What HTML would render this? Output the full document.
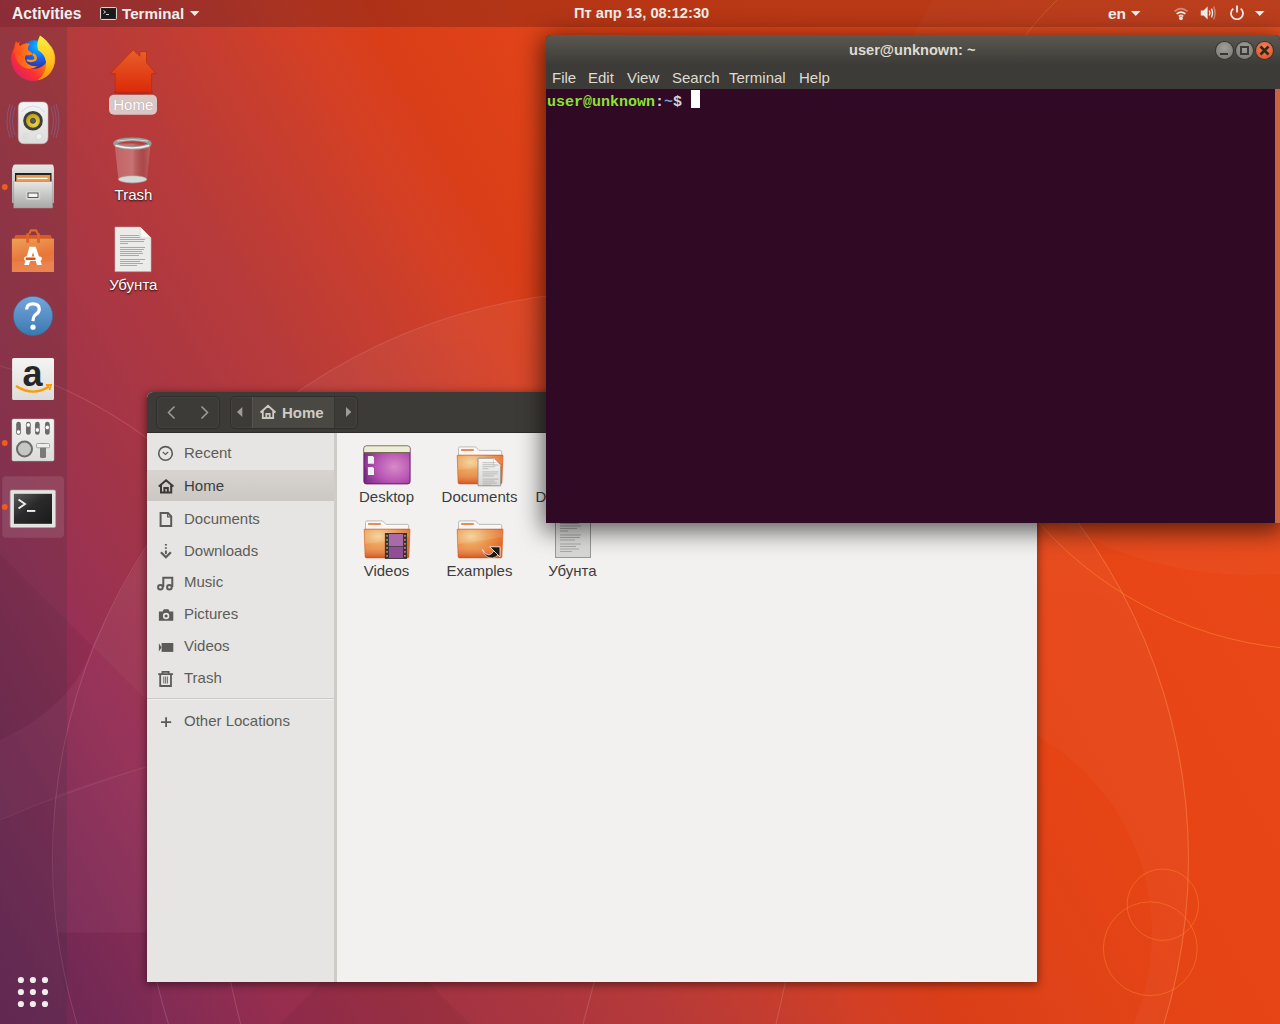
<!DOCTYPE html>
<html><head><meta charset="utf-8">
<style>
*{margin:0;padding:0;box-sizing:border-box}
html,body{width:1280px;height:1024px;overflow:hidden}
body{position:relative;font-family:"Liberation Sans",sans-serif;
background:linear-gradient(60deg,#6c2658 0%,#782a56 6%,#963056 15.5%,#a0344a 22%,#b83b3a 36%,#c83e2e 42.5%,#d54024 47%,#da3e18 51%,#e04318 58%,#e64414 66%,#e84616 75%,#ea4a18 100%)}
.abs{position:absolute}
#wp{position:absolute;left:0;top:0;width:1280px;height:1024px}
#topbar{position:absolute;left:0;top:0;width:1280px;height:27px;background:rgba(0,0,20,0.2);color:#eeeeec;font-weight:bold;font-size:15px}
#dock{position:absolute;left:0;top:27px;width:67px;height:997px;background:rgba(58,54,64,0.21)}
.dicon{position:absolute}
.deskicon{position:absolute;color:#fff;font-size:15px;text-align:center;text-shadow:0 1px 2px rgba(0,0,0,0.9)}
/* nautilus */
#naut{position:absolute;left:147px;top:392px;width:890px;height:590px;background:#f2f1f0;border-radius:6px 6px 0 0;box-shadow:0 2px 9px 1px rgba(0,0,0,0.45)}
#nhead{position:absolute;left:0;top:0;width:890px;height:41px;background:#3c3b37;border-radius:6px 6px 0 0;border-bottom:1px solid #2e2d2a}
#nside{position:absolute;left:0;top:41px;width:187px;height:549px;background:#e6e5e3}
#ndiv{position:absolute;left:187px;top:41px;width:3px;height:549px;background:#cfcbc7}
.srow{position:absolute;left:0;width:187px;height:32px;color:#5d5b56;font-size:15px}
.srow span{position:absolute;left:37px;top:7px}
.nbtn{position:absolute;top:4px;height:33px;border:1px solid #2f2e2a;border-radius:5px;box-shadow:inset 0 0 0 1px rgba(255,255,255,0.04)}
.stxt{position:absolute;left:37px;font-size:15px;line-height:17px;color:#5e5c57}
.srow.sel{background:linear-gradient(#d8d5d1,#ccc8c4);border-top:1px solid #c9c6c2}
.flbl{position:absolute;color:#3c3c3c;font-size:15px;line-height:17px;text-align:center;width:93px}
/* terminal */
#term{position:absolute;left:546px;top:35px;width:734px;height:488px;background:#300a24;border-radius:5px 5px 0 0;box-shadow:0 5px 24px 3px rgba(0,0,0,0.62)}
#ttitle{position:absolute;left:0;top:0;width:734px;height:29px;border-radius:5px 5px 0 0;background:linear-gradient(#5a5850,#3d3c38)}
#tmenu{position:absolute;left:0;top:29px;width:734px;height:25px;background:#3c3b37;color:#dfdbd2;font-size:15px}
#tmenu span{position:absolute;top:5px}
.wbtn{position:absolute;top:7px;width:17px;height:17px;border-radius:50%;background:radial-gradient(circle at 50% 35%,#a09e98,#77756f);box-shadow:0 0 0 1px #36352f}
.wbtn.cls{background:radial-gradient(circle at 50% 35%,#f6845a,#df4b1d)}
</style></head><body>
<svg id="wp" width="1280" height="1024">
 <defs><linearGradient id="cov" x1="0" y1="0" x2="0" y2="1"><stop offset="0" stop-color="#fff" stop-opacity="0.05"/><stop offset="0.12" stop-color="#fff" stop-opacity="0.035"/><stop offset="0.3" stop-color="#fff" stop-opacity="0"/></linearGradient></defs>
 <circle cx="620.5" cy="859" r="568" fill="url(#cov)" stroke="#ffa8c0" stroke-opacity="0.2" stroke-width="1"/>
 <defs><linearGradient id="bsh" x1="0" y1="0" x2="1" y2="0"><stop offset="0" stop-color="rgb(150,20,0)" stop-opacity="0"/><stop offset="0.14" stop-color="rgb(150,20,0)" stop-opacity="0.09"/><stop offset="0.63" stop-color="rgb(150,20,0)" stop-opacity="0.03"/><stop offset="1" stop-color="rgb(150,20,0)" stop-opacity="0"/></linearGradient></defs>
 <rect x="140" y="975" width="910" height="49" fill="url(#bsh)"/>
 <path d="M0 366Q75 386 147 438" fill="none" stroke="#ff9aa0" stroke-opacity="0.22" stroke-width="1.2"/>
 <path d="M0 554L92 646Q75 705 0 740Z" fill="#000" fill-opacity="0.05"/>
 <path d="M375 929L470 1024H280Z" fill="#000" fill-opacity="0.05"/>
 <path d="M152 540Q118 590 92.5 646.5L152 706Z" fill="#fff" fill-opacity="0.05"/>
 <path d="M0 740Q75 705 92.5 646.5L152 706V765Q70 790 0 820Z" fill="#fff" fill-opacity="0.025"/>
 <path d="M0 820Q70 790 152 765" fill="none" stroke="#ffa0c0" stroke-opacity="0.12" stroke-width="1"/>
 <path d="M57 932.5H152V1024H77Q60 990 57 932.5Z" fill="#000" fill-opacity="0.02"/>
 <path d="M152 765Q110 776 55 795Q52 860 57 932.5H152Z" fill="#fff" fill-opacity="0.03"/>
 <g stroke="#fff" stroke-opacity="0.14" stroke-width="1.1" fill="none">
  <path d="M152 960Q158 990 168.5 1024"/><path d="M226 960Q232 990 240.6 1024"/><path d="M600 960Q592 990 583 1024"/><path d="M790 960Q784 990 776 1024"/>
 </g>
 <circle cx="1250" cy="200" r="375" fill="#fff" fill-opacity="0.03"/>
 <circle cx="620.5" cy="859" r="568" fill="none" stroke="#ff8a30" stroke-opacity="0.35" stroke-width="1" clip-path="url(#rclip)"/>
 <clipPath id="rclip"><rect x="1000" y="500" width="280" height="524"/></clipPath>
 <path d="M52.5 859A568 568 0 1 0 1188.5 859A568 568 0 1 0 52.5 859ZM696 934A228 228 0 1 1 1152 934A228 228 0 1 1 696 934Z" fill="#fff" fill-opacity="0.03" fill-rule="evenodd" clip-path="url(#rclip)"/>
 <circle cx="1322" cy="271" r="379" fill="none" stroke="#ff8a30" stroke-opacity="0.55" stroke-width="1"/>
 <circle cx="1162.8" cy="904.7" r="35.7" fill="none" stroke="#ff8a30" stroke-opacity="0.45" stroke-width="1"/>
 <circle cx="1150.3" cy="948.7" r="46.9" fill="none" stroke="#ff8a30" stroke-opacity="0.45" stroke-width="1"/>
</svg>
<div id="topbar">
  <div class="abs" style="left:12px;top:5px;line-height:17px;font-size:15.6px">Activities</div>
  <svg class="abs" style="left:100px;top:7px" width="17" height="13"><rect x="0.5" y="0.5" width="16" height="12" rx="1" fill="#2e2e2e" stroke="#d8d8d8" stroke-width="1"/><rect x="1.5" y="1.5" width="14" height="10" fill="#1a1a1a"/><path d="M3.5 3.5L5.5 5L3.5 6.5" stroke="#eee" stroke-width="0.9" fill="none"/><path d="M6 7.5H9" stroke="#eee" stroke-width="0.9"/></svg>
  <div class="abs" style="left:122px;top:5px;line-height:17px;font-size:15.2px">Terminal</div>
  <svg class="abs" style="left:190px;top:11px" width="10" height="6"><path d="M0 0H9.5L4.75 5Z" fill="#eeeeec"/></svg>
  <div class="abs" style="left:574px;top:5px;line-height:17px;font-size:14.7px">Пт апр 13, 08:12:30</div>
  <div class="abs" style="left:1108px;top:5px;line-height:17px;font-size:15.5px">en</div>
  <svg class="abs" style="left:1131px;top:11px" width="10" height="6"><path d="M0 0H9.5L4.75 5Z" fill="#eeeeec"/></svg>
  <svg class="abs" style="left:1173px;top:6px" width="16" height="15"><path d="M1.5 5.3Q8 -0.2 14.5 5.3" stroke="#eeeeec" stroke-opacity="0.45" stroke-width="1.6" fill="none"/><path d="M3.6 7.9Q8 4.2 12.4 7.9" stroke="#eeeeec" stroke-width="1.7" fill="none"/><path d="M5.7 10.3Q8 8.5 10.3 10.3" stroke="#eeeeec" stroke-width="1.7" fill="none"/><circle cx="8" cy="12.3" r="1.9" fill="#eeeeec"/></svg>
  <svg class="abs" style="left:1200px;top:5px" width="18" height="16"><path d="M0.8 5.5H3.6L7.6 1.5V14.5L3.6 10.5H0.8Z" fill="#eeeeec"/><path d="M9.3 5.5Q10.6 8 9.3 10.5" stroke="#eeeeec" stroke-width="1.4" fill="none"/><path d="M11.4 3.6Q13.6 8 11.4 12.4" stroke="#eeeeec" stroke-width="1.4" fill="none"/><path d="M13.6 1.6Q16.6 8 13.6 14.4" stroke="#eeeeec" stroke-opacity="0.45" stroke-width="1.3" fill="none"/></svg>
  <svg class="abs" style="left:1229px;top:5px" width="16" height="15"><path d="M4.3 3.6A6 6 0 1 0 11.7 3.6" stroke="#eeeeec" stroke-width="1.8" fill="none"/><path d="M8 0.5V7.5" stroke="#eeeeec" stroke-width="1.8"/></svg>
  <svg class="abs" style="left:1255px;top:11px" width="10" height="6"><path d="M0 0H9.5L4.75 5Z" fill="#eeeeec"/></svg>
</div>
<div id="dock">
 <svg class="abs" style="left:0;top:-27px" width="67" height="1024">
  <defs>
   <radialGradient id="ffo" cx="0.35" cy="0.75" r="0.85"><stop offset="0" stop-color="#ff3a2a"/><stop offset="0.4" stop-color="#ff5a1e"/><stop offset="0.75" stop-color="#ffa00a"/><stop offset="1" stop-color="#ffd53a"/></radialGradient>
   <radialGradient id="ffb" cx="0.5" cy="0.3" r="0.8"><stop offset="0" stop-color="#0aa8ff"/><stop offset="0.6" stop-color="#2a5ad8"/><stop offset="1" stop-color="#3a1a8a"/></radialGradient>
   <linearGradient id="gry" x1="0" y1="0" x2="0" y2="1"><stop offset="0" stop-color="#e6e6e4"/><stop offset="1" stop-color="#a8a8a6"/></linearGradient>
   <linearGradient id="bag" x1="0" y1="0" x2="0.3" y2="1"><stop offset="0" stop-color="#eca058"/><stop offset="0.65" stop-color="#e8763a"/><stop offset="1" stop-color="#ea7e44"/></linearGradient>
   <linearGradient id="hlp" x1="0" y1="0" x2="0" y2="1"><stop offset="0" stop-color="#76a6dc"/><stop offset="1" stop-color="#3a78b0"/></linearGradient>
   <linearGradient id="wht" x1="0" y1="0" x2="0" y2="1"><stop offset="0" stop-color="#f4f4f3"/><stop offset="1" stop-color="#dcdcda"/></linearGradient>
   <linearGradient id="trm" x1="0" y1="0" x2="1" y2="1"><stop offset="0" stop-color="#5a5a5a"/><stop offset="0.45" stop-color="#2a2a2a"/><stop offset="1" stop-color="#1a1a1a"/></linearGradient>
  </defs>
  <!-- firefox -->
  <defs>
   <linearGradient id="ffbase" x1="0.1" y1="0.9" x2="0.9" y2="0.1"><stop offset="0" stop-color="#d8206a"/><stop offset="0.3" stop-color="#ff3030"/><stop offset="0.6" stop-color="#ff7a10"/><stop offset="1" stop-color="#ffc020"/></linearGradient>
   <linearGradient id="fftail" x1="0" y1="0" x2="0" y2="1"><stop offset="0" stop-color="#fff040"/><stop offset="0.6" stop-color="#ffc020"/><stop offset="1" stop-color="#ff8a10"/></linearGradient>
   <radialGradient id="ffglobe" cx="0.65" cy="0.2" r="0.9"><stop offset="0" stop-color="#00c8ff"/><stop offset="0.45" stop-color="#1a6af0"/><stop offset="1" stop-color="#3a1c8c"/></radialGradient>
   <linearGradient id="ffhead" x1="0" y1="0" x2="1" y2="0"><stop offset="0" stop-color="#ff4a20"/><stop offset="1" stop-color="#ff9a10"/></linearGradient>
  </defs>
  <clipPath id="ffclip"><path d="M0 0H67V100H0ZM18.5 48A16 16 0 1 1 50.5 48A16 16 0 1 1 18.5 48Z" clip-rule="evenodd"/></clipPath><circle cx="33.2" cy="59" r="22" fill="url(#ffbase)" clip-path="url(#ffclip)"/>
  <circle cx="34.5" cy="54.5" r="14.2" fill="url(#ffglobe)"/>
  <path d="M40 35.5Q47 40 51 47Q57 57 53 68Q49 78 38 80Q47 72 46 62Q45 54 38 50Q36 43 40 35.5Z" fill="url(#fftail)"/>
  <path d="M16 41L20 46Q25 42 30 44Q27 47 28 50Q31 52 33 54Q30 56 26 55Q23 59 28 64Q33 67 38 66Q32 70 25 68Q17 64 15 56Q13 48 16 41Z" fill="url(#ffhead)"/>
  <path d="M33 54Q37 57 35 60Q31 62 27 60" fill="none" stroke="#ff9a10" stroke-width="2.5"/>
  <!-- rhythmbox -->
  <g fill="none" stroke="#7a78b8" stroke-opacity="0.5" stroke-width="0.9"><path d="M15 107Q10 121 15 135"/><path d="M12.5 105Q7 121 12.5 137"/><path d="M10 104Q4 121 10 138"/><path d="M51 107Q56 121 51 135"/><path d="M53.5 105Q59 121 53.5 137"/><path d="M56 104Q62 121 56 138"/></g>
  <defs><radialGradient id="cone" cx="0.6" cy="0.65" r="0.7"><stop offset="0" stop-color="#f2de50"/><stop offset="1" stop-color="#b89810"/></radialGradient></defs>
  <path d="M23 102H43Q48 102 48 108V137Q48 143.7 42 143.7H24Q18.3 143.7 18.3 137V108Q18.3 102 23 102Z" fill="url(#wht)" stroke="#c0c0be" stroke-width="0.6"/>
  <path d="M21 112Q33 100 45 112" fill="none" stroke="#9ab8e0" stroke-opacity="0.5" stroke-width="0.8"/>
  <circle cx="33" cy="120.8" r="9.8" fill="#3e3e3e"/>
  <circle cx="33" cy="120.8" r="7" fill="url(#cone)"/>
  <circle cx="33" cy="120.8" r="2.6" fill="#5a5a5a" stroke="#2a2a2a" stroke-width="0.6"/>
  <circle cx="39" cy="136.5" r="3" fill="#f0f0ee" stroke="#cfcfcd" stroke-width="0.6"/>
  <rect x="23.5" y="134" width="4" height="4" rx="1" fill="none" stroke="#d4d4d2" stroke-width="0.6"/>
  <!-- files -->
  <path d="M13.5 165Q14 164.6 15 164.6H52Q53 164.6 53.5 166L54 169V203H12V169Z" fill="url(#gry)"/>
  <rect x="15" y="173" width="36.5" height="9" fill="#222"/>
  <rect x="16.2" y="175" width="34" height="6.5" fill="#ec9a4a"/>
  <rect x="17.5" y="177.8" width="30" height="1.2" fill="#fff"/>
  <rect x="13.8" y="181.5" width="38.8" height="26.5" fill="url(#gry)" stroke="#9a9a98" stroke-width="0.5"/>
  <rect x="26" y="191" width="14" height="8.5" rx="1.5" fill="#ddd" stroke="#cfcfcd" stroke-width="0.8"/>
  <rect x="28" y="193" width="10" height="4.5" fill="#f4f4f4" stroke="#444" stroke-width="0.9"/>
  <!-- software -->
  <path d="M13.7 239L15.5 235H50.6L52.4 239Z" fill="#d65a22"/>
  <path d="M28 234L30.2 229.2H36.8L39 234H36.6L35.6 231.6H31.4L30.4 234Z" fill="#e0682e"/>
  <rect x="11.9" y="238.7" width="42.1" height="33.3" fill="url(#bag)"/>
  <rect x="11.9" y="261.5" width="42.1" height="10.5" fill="#fff" fill-opacity="0.06"/>
  <rect x="26.2" y="233.5" width="2.9" height="9.3" fill="#e0642a"/>
  <rect x="37" y="233.5" width="3" height="9.3" fill="#e0642a"/>
  <path d="M29.5 246.8H35.7L41.9 265H37L33 252.2L28.9 265H24.2Z" fill="#fff"/>
  <rect x="23.9" y="256.6" width="18" height="4.3" rx="2.1" fill="#fff"/>
  <rect x="25.5" y="257.5" width="10.2" height="2.5" rx="1.2" fill="#e0500a"/>
  <!-- help -->
  <circle cx="33" cy="316" r="19.6" fill="url(#hlp)" stroke="#3a6ea0" stroke-width="0.6"/>
  <path d="M26.6 309.5Q26.6 303.8 33 303.8Q39.3 303.8 39.3 309.2Q39.3 312.5 35.6 314.6Q33.3 316 33 321.2" fill="none" stroke="#fff" stroke-width="3.2"/>
  <circle cx="33" cy="327.2" r="2.6" fill="#fff"/>
  <!-- amazon -->
  <rect x="12.1" y="358" width="41.9" height="42" rx="1.5" fill="url(#wht)"/>
  <text x="32.5" y="386" text-anchor="middle" font-family="Liberation Sans" font-weight="bold" font-size="36" fill="#262626">a</text>
  <path d="M16 386Q33 397 49 386.5" fill="none" stroke="#ff9a00" stroke-width="2.4"/>
  <path d="M46 385L51 385L49.5 390" fill="none" stroke="#ff9a00" stroke-width="1.8"/>
  <!-- mixer -->
  <rect x="12" y="419" width="42" height="42" rx="1.5" fill="url(#wht)" stroke="#bcbcba" stroke-width="0.5"/>
  <g fill="#6a6a68"><rect x="16.2" y="421.8" width="4.7" height="13" rx="2.35"/><rect x="26" y="421.8" width="4.7" height="13" rx="2.35"/><rect x="35" y="421.8" width="4.7" height="13" rx="2.35"/><rect x="45" y="421.8" width="4.7" height="13" rx="2.35"/></g>
  <g fill="#fff" stroke="#555" stroke-width="0.6"><circle cx="18.5" cy="432" r="2.2"/><circle cx="28.3" cy="425" r="2.2"/><circle cx="37.3" cy="430" r="2.2"/><circle cx="47.3" cy="427.5" r="2.2"/></g>
  <circle cx="24.5" cy="449" r="7.5" fill="#c6c6c4" stroke="#6a6a68" stroke-width="2"/>
  <rect x="40" y="443" width="6" height="15" rx="1.5" fill="#7a7a78"/>
  <rect x="36.5" y="443.5" width="13" height="4.3" rx="1" fill="#eee" stroke="#888" stroke-width="0.7"/>
  <!-- terminal active -->
  <rect x="2.2" y="476.2" width="61.8" height="61.5" rx="4" fill="#fff" fill-opacity="0.1"/>
  <rect x="10.2" y="490" width="45.4" height="37.5" rx="1.5" fill="#e4e4e2" stroke="#a8a8a6" stroke-width="0.6"/>
  <rect x="13.9" y="493.8" width="38.1" height="30" fill="url(#trm)"/>
  <path d="M18.5 499.5L25 504L18.5 508.5" fill="none" stroke="#eee" stroke-width="1.9"/>
  <rect x="27" y="510" width="8.3" height="1.9" fill="#eee"/>
  <!-- running dots -->
  <g fill="#f25a1e"><circle cx="4.8" cy="187" r="2.9"/><circle cx="4.8" cy="443" r="2.9"/><circle cx="4.8" cy="507" r="2.9"/></g>
  <!-- app grid -->
  <g fill="#eeeeec"><circle cx="20.9" cy="980" r="3.1"/><circle cx="32.9" cy="980" r="3.1"/><circle cx="45" cy="980" r="3.1"/><circle cx="20.9" cy="992" r="3.1"/><circle cx="32.9" cy="992" r="3.1"/><circle cx="45" cy="992" r="3.1"/><circle cx="20.9" cy="1004" r="3.1"/><circle cx="32.9" cy="1004" r="3.1"/><circle cx="45" cy="1004" r="3.1"/></g>
 </svg>
</div>


<svg class="abs" style="left:100px;top:40px" width="70" height="260">
 <defs>
  <linearGradient id="hse" x1="0" y1="0" x2="0" y2="1"><stop offset="0" stop-color="#e8602a"/><stop offset="1" stop-color="#dc2a08"/></linearGradient>
  <linearGradient id="tbody" x1="0" y1="0" x2="1" y2="0"><stop offset="0" stop-color="#fff" stop-opacity="0.12"/><stop offset="0.5" stop-color="#fff" stop-opacity="0.2"/><stop offset="0.8" stop-color="#000" stop-opacity="0.08"/><stop offset="1" stop-color="#fff" stop-opacity="0.12"/></linearGradient>
 </defs>
 <ellipse cx="33.5" cy="52.5" rx="20" ry="2.5" fill="#000" fill-opacity="0.15"/>
 <path d="M33.2 9.8L39.8 16.2V11.6H46.5V22.7L55.9 33.6H51.6V52.3H15.2V33.6H10.2Z" fill="url(#hse)" stroke="#c42a0a" stroke-width="0.8" stroke-linejoin="miter"/>
 <rect x="9" y="54.7" width="48" height="20.1" rx="5" fill="#dcd2d1" fill-opacity="0.92"/>
 <text x="33.3" y="69.5" text-anchor="middle" font-family="Liberation Sans" font-size="15" fill="#fff" style="text-shadow:0 0 1px rgba(0,0,0,0.25)">Home</text>
 <!-- trash -->
 <path d="M14.5 103.5L18.6 140.5Q32.5 146 46.8 140.5L50.6 103.5Z" fill="#c06060" fill-opacity="0.55"/>
 <path d="M14.5 103.5L18.6 140.5Q32.5 146 46.8 140.5L50.6 103.5Z" fill="url(#tbody)"/>
 <ellipse cx="32.6" cy="139.3" rx="14.2" ry="3.6" fill="#d8d8d6" stroke="#9a9a98" stroke-width="0.6"/>
 <ellipse cx="32.4" cy="103.6" rx="17.4" ry="4.3" fill="none" stroke="#9a9a98" stroke-width="3.8"/>
 <path d="M15.5 105.5Q32.4 110.5 49.3 105.5" fill="none" stroke="#f0f0ee" stroke-width="1.6"/>
 <path d="M17 101Q32.4 98 47.8 101" fill="none" stroke="#d8d8d6" stroke-width="1"/>
 <text x="33.5" y="160" text-anchor="middle" font-family="Liberation Sans" font-size="15" fill="#fff" style="text-shadow:0 1px 2px rgba(0,0,0,0.9)">Trash</text>
 <!-- text doc -->
 <path d="M15 187.1H40.2L51 197.9V231.6H15Z" fill="#ebebea" stroke="#b8b8b6" stroke-width="0.6"/>
 <path d="M40.2 187.1V197.9H51" fill="#fafafa" stroke="#c8c8c6" stroke-width="0.6"/>
 <g stroke="#8c8c8a" stroke-width="0.7"><path d="M20 195.5H39M20 197.5H40M20 199.5H45M20 201.5H44M20 203.5H28M20 207.5H45M20 209.5H44M20 211.5H42M20 213.5H43M20 215.5H39M20 219.5H45M20 221.5H40M20 223.5H43M20 225.5H37"/></g>
 <text x="33.3" y="249.6" text-anchor="middle" font-family="Liberation Sans" font-size="15" fill="#fff" style="text-shadow:0 1px 2px rgba(0,0,0,0.9)">Убунта</text>
</svg>
<div id="naut">
  <div id="nhead">
    <div class="nbtn" style="left:9px;width:64px"></div>
    <svg class="abs" style="left:9px;top:4px" width="64" height="33"><path d="M18.5 10.5L12.5 16.5L18.5 22.5" stroke="#a09d96" stroke-width="1.5" fill="none"/><path d="M45.5 10.5L51.5 16.5L45.5 22.5" stroke="#a09d96" stroke-width="1.5" fill="none"/></svg>
    <div class="nbtn" style="left:83px;width:128px"></div>
    <div class="abs" style="left:105px;top:5px;width:83px;height:31px;background:#4a4843;border-left:1px solid #56544e;border-right:1px solid #35342f"></div>
    <svg class="abs" style="left:83px;top:4px" width="128" height="33"><path d="M7 16L12.3 11V21Z" fill="#a09d96"/><path d="M121.3 16L116 11V21Z" fill="#a09d96"/>
      <path d="M30.5 16.5L38 9.8L45.5 16.5M32.8 15V22H43.2V15M36.3 22V17.8H39.7V22" stroke="#cdcac2" stroke-width="1.8" fill="none" stroke-linejoin="miter"/></svg>
    <div class="abs" style="left:135px;top:12px;font-size:15px;line-height:17px;font-weight:bold;color:#cfccc4">Home</div>
  </div>
  <div id="nside">
    <div class="abs" style="left:0;top:37px;width:187px;height:31px;background:linear-gradient(#d8d5d1,#cbc7c3);border-top:0px solid #c9c6c2"></div>
    <svg class="abs" style="left:0;top:0" width="187" height="300" fill="none" stroke="#5c5b58">
      <circle cx="18.5" cy="20.4" r="6.8" stroke-width="1.6"/><path d="M15.8 19L18.5 21.5L21.2 19" stroke-width="1.2"/>
      <path d="M11.8 53.5L19.1 47.2L26.4 53.5M14 52V59.5H24.2V52M17.4 59.5V55H20.8V59.5" stroke="#3a3a3a" stroke-width="2"/>
      <path d="M13.6 80H21L24.2 83.4V93.1H13.6Z" stroke-width="2"/><path d="M20.6 80.2V83.8H24" stroke-width="1.2"/>
      <path d="M18.9 111V112.6M18.9 114.2V115.8M18.9 117.4V121" stroke-width="2"/><path d="M13.9 119.2L18.9 124.2L23.9 119.2" stroke-width="2.2"/>
      <path d="M16.3 154V144.8H25.3V154" stroke-width="2"/><circle cx="13.4" cy="154.2" r="2.3" stroke-width="2"/><circle cx="22.4" cy="154.2" r="2.3" stroke-width="2"/>
      <path d="M11.9 178.6H15.6L16.8 176.2H21.4L22.6 178.6H26.3V187.8H11.9Z" fill="#5c5b58" stroke="none"/><circle cx="19.1" cy="183" r="2.4" stroke="#e8e7e6" stroke-width="1.6"/>
      <path d="M11.9 210.3L14.6 214.4L11.9 218.6Z" fill="#5c5b58" stroke="none"/><rect x="14.6" y="210" width="11.7" height="8.9" fill="#5c5b58" stroke="none"/>
      <path d="M11.2 241.2H26M15.5 240.8V238.8H21.7V240.8M13.2 241.5V253H24V241.5" stroke-width="1.8"/><path d="M16.8 243.5V250.5M18.6 243.5V250.5M20.4 243.5V250.5" stroke-width="0.9"/>
      <path d="M19.1 284.3V293.9M14 289.1H24.2" stroke-width="1.8"/>
    </svg>
    <div class="stxt" style="top:11px">Recent</div>
    <div class="stxt" style="top:44px;color:#3c3c3c">Home</div>
    <div class="stxt" style="top:77px">Documents</div>
    <div class="stxt" style="top:109px">Downloads</div>
    <div class="stxt" style="top:140px">Music</div>
    <div class="stxt" style="top:172px">Pictures</div>
    <div class="stxt" style="top:204px">Videos</div>
    <div class="stxt" style="top:236px">Trash</div>
    <div class="abs" style="left:0;top:265px;width:187px;height:1px;background:#cdcac6"></div>
    <div class="abs" style="left:0;top:266px;width:187px;height:1px;background:#f0efee"></div>
    <div class="stxt" style="top:279px">Other Locations</div>
  </div>
  <div id="ndiv"></div>
  <svg class="abs" style="left:0;top:0" width="890" height="590">
   <defs>
    <radialGradient id="fgl" cx="0.3" cy="0.25" r="0.8"><stop offset="0" stop-color="#f4cf92"/><stop offset="0.45" stop-color="#eb9a50"/><stop offset="1" stop-color="#e2601f"/></radialGradient>
    <linearGradient id="fgd" x1="0" y1="0" x2="0" y2="1"><stop offset="0" stop-color="#fff" stop-opacity="0"/><stop offset="0.55" stop-color="#fff" stop-opacity="0"/><stop offset="1" stop-color="#c2400e" stop-opacity="0.45"/></linearGradient>
    <radialGradient id="pgl" cx="0.66" cy="0.55" r="0.75"><stop offset="0" stop-color="#d88ac8"/><stop offset="0.5" stop-color="#b957b4"/><stop offset="1" stop-color="#7a2a86"/></radialGradient>
    <linearGradient id="dgl" x1="0" y1="0" x2="0" y2="1"><stop offset="0" stop-color="#f6f6f5"/><stop offset="1" stop-color="#d5d5d3"/></linearGradient>
    
    
   </defs>
   <g transform="translate(-147 -392)">
    <!-- Desktop -->
    <g transform="translate(359 442)">
      <rect x="4.9" y="4" width="46.2" height="37.9" rx="2.5" fill="url(#pgl)" stroke="#6a0d6a" stroke-width="0.9"/>
      <path d="M4.9 10.8V6.5Q4.9 4 7.4 4H48.6Q51.1 4 51.1 6.5V10.8Z" fill="#eeecd8" stroke="#8a8a6a" stroke-width="0.6"/>
      <rect x="4.9" y="10.2" width="46.2" height="0.9" fill="#5e5e38"/>
      <path d="M5.5 41Q12 30 5.5 24Z" fill="#4a1a5a" fill-opacity="0.25"/>
      <path d="M8.9 14H13.7L15 15.3V21.8H8.9Z" fill="#f1f1f0"/>
      <path d="M8.9 25H13.7L15 26.3V33H8.9Z" fill="#f1f1f0"/>
    </g>
    <!-- Documents -->
    <g transform="translate(452 442)">
      <g>
      <path d="M6.5 14V6.3Q6.5 4.9 8 4.9H23.6L27 8.4H48.2Q49.7 8.4 49.7 9.9V14Z" fill="#f8f8f7" stroke="#b5b5b3" stroke-width="0.9"/>
      <rect x="8.9" y="7" width="13.1" height="1.9" rx="0.9" fill="#ec8a52"/>
      <path d="M5.2 13.6Q5.2 13.1 5.8 13.1H50.4Q51 13.1 51 13.6L49.9 40.6Q49.8 41.9 48.5 41.9H7.5Q6.2 41.9 6.1 40.6Z" fill="url(#fgl)"/>
      <path d="M5.2 13.6Q5.2 13.1 5.8 13.1H50.4Q51 13.1 51 13.6L49.9 40.6Q49.8 41.9 48.5 41.9H7.5Q6.2 41.9 6.1 40.6Z" fill="url(#fgd)" stroke="#d2581e" stroke-width="0.6"/>
      <path d="M6 28Q28 25 50.5 21V14H6Z" fill="#fff" fill-opacity="0.12"/>
    </g>
      <path d="M26 16.2H41.5L48.7 23.4V43.8H26Z" fill="url(#dgl)" stroke="#8d8d8b" stroke-width="0.9"/>
      <path d="M41.5 16.2V23.4H48.7" fill="#fff" stroke="#bdbdbb" stroke-width="0.6"/>
      <g transform="translate(30.5 20.3) scale(0.75 0.8)"><g stroke="#8a8a88" stroke-width="0.6">
      <path d="M0 0.5H19M0 3H21M0 5.5H17M0 8H8M0 12H21M0 14.5H20M0 17H15M0 21H21M0 23.5H16M0 26H19M0 28.5H12"/>
    </g></g>
    </g>
    <!-- Videos -->
    <g transform="translate(359 516)">
      <g>
      <path d="M6.5 14V6.3Q6.5 4.9 8 4.9H23.6L27 8.4H48.2Q49.7 8.4 49.7 9.9V14Z" fill="#f8f8f7" stroke="#b5b5b3" stroke-width="0.9"/>
      <rect x="8.9" y="7" width="13.1" height="1.9" rx="0.9" fill="#ec8a52"/>
      <path d="M5.2 13.6Q5.2 13.1 5.8 13.1H50.4Q51 13.1 51 13.6L49.9 40.6Q49.8 41.9 48.5 41.9H7.5Q6.2 41.9 6.1 40.6Z" fill="url(#fgl)"/>
      <path d="M5.2 13.6Q5.2 13.1 5.8 13.1H50.4Q51 13.1 51 13.6L49.9 40.6Q49.8 41.9 48.5 41.9H7.5Q6.2 41.9 6.1 40.6Z" fill="url(#fgd)" stroke="#d2581e" stroke-width="0.6"/>
      <path d="M6 28Q28 25 50.5 21V14H6Z" fill="#fff" fill-opacity="0.12"/>
    </g>
      <rect x="26.3" y="17.4" width="21.3" height="25" fill="#2f3436" stroke="#2a2e30" stroke-width="0.8"/>
      <rect x="29.9" y="18" width="14.2" height="12.2" fill="#a86aa8"/>
      <rect x="29.9" y="30.8" width="14.2" height="11.2" fill="#8f4e96"/>
      <g fill="#e8823e"><rect x="27.2" y="19" width="1.7" height="1.7"/><rect x="27.2" y="23" width="1.7" height="1.7"/><rect x="27.2" y="27" width="1.7" height="1.7"/><rect x="27.2" y="31" width="1.7" height="1.7"/><rect x="27.2" y="35" width="1.7" height="1.7"/><rect x="27.2" y="39" width="1.7" height="1.7"/>
      <rect x="45.1" y="19" width="1.7" height="1.7"/><rect x="45.1" y="23" width="1.7" height="1.7"/><rect x="45.1" y="27" width="1.7" height="1.7"/><rect x="45.1" y="31" width="1.7" height="1.7"/><rect x="45.1" y="35" width="1.7" height="1.7"/><rect x="45.1" y="39" width="1.7" height="1.7"/></g>
    </g>
    <!-- Examples -->
    <g transform="translate(452 516)">
      <g>
      <path d="M6.5 14V6.3Q6.5 4.9 8 4.9H23.6L27 8.4H48.2Q49.7 8.4 49.7 9.9V14Z" fill="#f8f8f7" stroke="#b5b5b3" stroke-width="0.9"/>
      <rect x="8.9" y="7" width="13.1" height="1.9" rx="0.9" fill="#ec8a52"/>
      <path d="M5.2 13.6Q5.2 13.1 5.8 13.1H50.4Q51 13.1 51 13.6L49.9 40.6Q49.8 41.9 48.5 41.9H7.5Q6.2 41.9 6.1 40.6Z" fill="url(#fgl)"/>
      <path d="M5.2 13.6Q5.2 13.1 5.8 13.1H50.4Q51 13.1 51 13.6L49.9 40.6Q49.8 41.9 48.5 41.9H7.5Q6.2 41.9 6.1 40.6Z" fill="url(#fgd)" stroke="#d2581e" stroke-width="0.6"/>
      <path d="M6 28Q28 25 50.5 21V14H6Z" fill="#fff" fill-opacity="0.12"/>
    </g>
      <path d="M30.5 33.5Q33 42.5 40.5 42Q44 41.5 46.5 38.5L42 34.5Q40 38.5 37 39Q33 39 30.5 33.5Z" fill="#1c1816" stroke="#fff" stroke-width="0.8" stroke-opacity="0.8"/>
      <path d="M37.8 30.8H48V41Z" fill="#1c1816" stroke="#fff" stroke-width="0.8"/>
    </g>
    <!-- Ubuntu doc -->
    <g transform="translate(555 513)">
      <rect x="0.5" y="0.5" width="35" height="44" fill="url(#dgl)" stroke="#999997" stroke-width="1"/>
      <g transform="translate(5 10)"><g stroke="#8a8a88" stroke-width="0.6">
      <path d="M0 0.5H19M0 3H21M0 5.5H17M0 8H8M0 12H21M0 14.5H20M0 17H15M0 21H21M0 23.5H16M0 26H19M0 28.5H12"/>
    </g></g>
    </g>
   </g>
  </svg>
  <div class="flbl" style="left:193px;top:96px">Desktop</div>
  <div class="flbl" style="left:286px;top:96px">Documents</div>
  <div class="flbl" style="left:379px;top:96px">Downloads</div>
  <div class="flbl" style="left:193px;top:170px">Videos</div>
  <div class="flbl" style="left:286px;top:170px">Examples</div>
  <div class="flbl" style="left:379px;top:170px">Убунта</div>

</div>

<div id="term">
  <div id="ttitle"><div class="abs" style="left:303px;top:7px;font-weight:bold;font-size:14.6px;color:#dfdbd2">user@unknown: ~</div>
    <div class="wbtn" style="left:670px"><div style="position:absolute;left:4px;top:11px;width:8px;height:2px;background:#36352f"></div></div>
    <div class="wbtn" style="left:690px"><div style="position:absolute;left:4px;top:4px;width:9px;height:9px;border:2px solid #3c3b37"></div></div>
    <div class="wbtn cls" style="left:710px"><svg width="17" height="17" style="position:absolute;left:0;top:0"><path d="M4.5 4.5L12.5 12.5M12.5 4.5L4.5 12.5" stroke="#2b2a1c" stroke-width="2.6"/></svg></div>
  </div>
  <div id="tmenu">
    <span style="left:6px">File</span><span style="left:42px">Edit</span><span style="left:81px">View</span><span style="left:126px">Search</span><span style="left:183px">Terminal</span><span style="left:253px">Help</span>
  </div>
  <div id="tcontent" style="position:absolute;left:1px;top:59px;width:728px;height:429px;font-family:'Liberation Mono',monospace;font-size:15px;line-height:18px;font-weight:bold;white-space:pre"><span style="color:#8ae234">user@unknown</span><span style="color:#d3d7cf">:</span><span style="color:#729fcf">~</span><span style="color:#d3d7cf">$ </span></div>
  <div style="position:absolute;left:145px;top:55px;width:9px;height:18px;background:#fff"></div>
  <div style="position:absolute;left:729px;top:54px;width:5px;height:434px;background:#c8643f"></div>
</div>
</body></html>
